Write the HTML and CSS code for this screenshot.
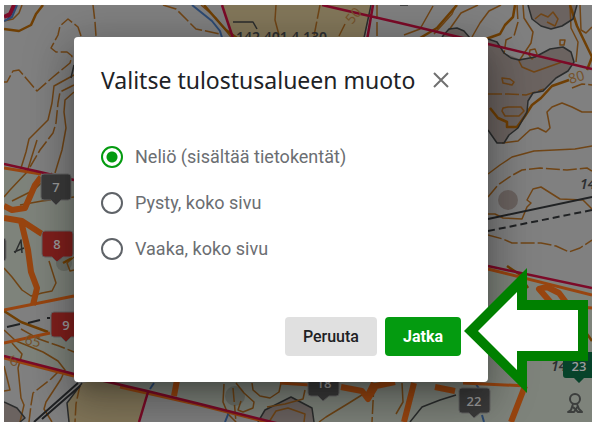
FILE: index.html
```html
<!DOCTYPE html>
<html lang="fi">
<head>
    <meta charset="UTF-8">
    <meta name="viewport" content="width=device-width, initial-scale=1.0">
    <title>Tulostusalueen muoto</title>
    <link rel="stylesheet" href="styles.css">
</head>
<body>
    <main class="stage">
        <svg class="map" viewBox="4 5 588 417" preserveAspectRatio="xMidYMid slice" aria-hidden="true">
            <!-- land areas -->
            <path class="wood" d="M4 164L74 180V296L4 310zM4 343L74 328V374L4 356zM74 374V380L200 403L280 422H592V292L488 265V374z"/>
            <path class="field" d="M222 5L234 40H364L372 5zM82 383L67 403L69 422H139L148 393L100 380z"/>
            <path class="rock" d="M488 39L497 42L504 53L519 59L535 57L550 49L563 47L571 52L574 62L568 71L556 78L543 92L533 93L528 101L527 112L518 128L509 135L504 143H497L488 130zM528 5L532 19L541 26L551 29L562 26L573 19L577 5zM442 37L449 29L457 28L464 31L470 38zM4 402L17 408L25 418L20 422H4z"/>
            <path class="rock edge" d="M258 422L265 410L291 397L312 408L314 422"/>
            <circle class="rock" cx="508" cy="200" r="10"/>
            <circle class="stone" cx="235" cy="396" r="10"/>
            <circle class="stone" cx="64" cy="263" r="8"/>

            <!-- contour lines -->
            <g class="contour">
                <path d="M4 21L13 19L19 13L22 5M74 75L54 86L52 103L48 120L29 139L26 152L21 168M74 92L65 100L64 112L66 128L62 150L55 173"/>
                <path d="M37 140L27 172L10 190L4 197M74 197L42 201L20 205M52 173L34 190L12 201M49 261L56 283L52 291L42 293L31 296L22 290L12 277L4 268M74 257L67 263L70 271L74 270"/>
                <path d="M4 330L16 341L26 345L43 352L58 361L65 370L61 379L46 402L44 409L52 422M12 343L22 354L18 368L21 398L24 405L20 422M4 366L8 382L10 390L4 391"/>
                <path d="M201 5L216 18L231 37M276 5L275 20L279 35M404 35L420 29L433 6M434 34L452 14L456 5M449 30L461 13L478 5M472 37L480 23L489 11L501 5M523 5L524 18L533 32L531 43L519 61L522 67L534 72L562 62L572 64"/>
                <path d="M570 5L571 28L578 42L576 62M580 5L581 30L586 33L592 27M502 78L510 79L514 82L512 85L503 83zM503 108L508 107H521L524 111L519 116H505L502 111zM560 40L565 40L564 45L560 45zM530 50L535 49L537 54L532 59L529 55z"/>
                <path d="M502 143L518 141L530 130L538 128L546 132L550 128L547 112L552 107L562 103L572 107L582 112H592M535 19L541 14L548 17L553 12L558 19L555 26L547 22"/>
                <path d="M488 174L500 165L512 157L534 151L575 149L592 146M488 214H495L503 218L522 219L527 207L531 203L527 200L533 189L541 187L560 199L583 200L592 209"/>
                <path d="M224 384L223 402L228 414L236 422M252 383L253 390L260 396L270 398L279 392L281 383M236 383L244 393L254 402L253 408L243 412L238 410L241 401M267 407L285 404L303 399L305 390M269 422L276 411L288 408L305 414L304 422M319 422L326 417L349 403L365 393M402 383L403 402L396 414"/>
            </g>
            <g class="contour dash">
                <path d="M93 5L95 22L96 36M81 36L78 27L68 19L60 26L58 35L51 48L56 52L67 52L72 56L70 63L53 77L37 91L19 70L13 71L7 82H4M74 85L60 92L58 103L56 123L53 133L40 150L30 167"/>
                <path d="M163 5L176 9L196 29L220 34M320 5L314 36M345 24L339 36M377 5V36M517 5L518 22L514 36L506 40L504 54M488 94L508 94L526 95L544 89M572 88L582 84L592 85"/>
                <path d="M488 197L498 185L511 176L522 170L540 168L567 170L587 168L592 171M488 235L503 239L512 243L541 243L556 246L569 252L580 248L592 240"/>
                <path d="M21 329L39 339L59 346L74 352M60 370L51 379L33 393L31 405L29 422M80 385L76 404L75 422M233 388L236 422M374 383L372 422"/>
            </g>
            <g class="contour bold">
                <path d="M4 29L19 31L31 25L36 14L43 5M204 5L217 20L226 30L241 41M415 41L437 28L457 5M486 39L500 34L505 25L513 17L515 5M570 5L577 26L592 57L587 70M569 80L552 86L541 98L532 105L525 116L517 127L507 127V122L498 118L490 108M4 311L21 322L48 332M63 263L72 258"/>
                <path d="M507 266L519 274L528 288M587 334L592 341"/>
            </g>

            <!-- streams, fences and power line -->
            <path class="water" d="M192 5L212 21L220 31L223 41M154 383L150 389M229 412L225 422M476 384L481 392M482 415L484 422"/>
            <path class="edge" d="M233 22H253L257 29M371 5L364 38M400 5H408M488 39L497 42L504 53L511 58L519 60L535 57L550 49L563 47L571 52L574 62L568 71L556 78L543 91L533 93L528 101L527 112L518 128L509 135L504 143H497L488 130M528 5L532 19L541 26L551 29L562 26L573 19L577 5M442 37L449 29L457 28L464 31L470 38"/>
            <path class="edge" d="M4 402L17 408L25 418L20 422M82 383L67 403L69 422M410 422L422 407L440 400L456 395M74 65L71 78M15 253L21 240L22 253M14 252L24 248"/>
            <path class="power" d="M34 422L78 383M42 419L80 386M7 327L20 324M28 323L40 320M47 318H50"/>
            <path class="power" d="M488 219L592 197"/>
            <path class="power broken" d="M488 231L592 210"/>

            <!-- roads and parcel borders -->
            <path class="road thin" d="M4 168L41 174M4 310L74 296M4 343L50 333M4 358L74 376M280 383L310 385M488 269L592 295M120 387L200 405L275 424M463 383L527 386M560 305L592 308"/>
            <path class="road" d="M41 177L35 185L25 208L12 210L4 206M4 218L22 221L42 234M21 221L28 250L31 272L37 288L33 305M177 380L174 396M414 383L404 422M525 386L511 422M341 387L362 391L368 399L376 386L395 382M374 383L366 399M455 391L435 387M553 305L539 289L547 287L559 293L568 305"/>
            <path class="border" d="M222 5L234 41M4 164L40 172L74 180M4 356L74 374L147 391L200 404L280 424M148 392L139 422M373 5L367 40M322 5L400 23L488 44L592 69M488 266L592 288M8 19L16 5"/>
            <path class="corner" d="M4 17L10 14L14 5"/>
            <path class="water" d="M4 21L12 17L17 5"/>

            <!-- map labels -->
            <text class="parcel upright" x="236" y="42">142 401 4 130</text>
            <text class="parcel" x="580" y="189">14</text>
            <text class="parcel" x="551" y="371">14</text>
            <text class="height" x="570" y="84" transform="rotate(-16 570 84)">80</text>
            <text class="height" x="24" y="344" transform="rotate(12 24 344)">65</text>
            <text class="height" x="352" y="25" transform="rotate(-50 352 25)">50</text>
            <text class="height" x="11" y="367" transform="rotate(-18 11 367)">6</text>
            <g class="statue">
                <circle cx="575" cy="399" r="5"/>
                <path d="M573 404L571 410L568 412H574L578 406M577 404L579 409L582 412H578L573 407"/>
            </g>

            <!-- control points -->
            <g class="pin">
                <path d="M44 174H68Q71 174 71 177V197Q71 200 68 200H61L56 205L51 200H44Q41 200 41 197V177Q41 174 44 174z"/>
                <text x="56" y="192">7</text>
            </g>
            <g class="pin">
                <path d="M-6 238H3Q6 238 6 241V258Q6 261 3 261H-6z"/>
            </g>
            <g class="pin red">
                <path d="M45 231H70Q73 231 73 234V254Q73 257 70 257H63L57 262L52 257H45Q42 257 42 254V234Q42 231 45 231z"/>
                <text x="57" y="249">8</text>
            </g>
            <g class="pin red">
                <path d="M54 312H79V337H71L66 342L61 337H54Q51 337 51 334V315Q51 312 54 312z"/>
                <text x="66" y="330">9</text>
            </g>
            <g class="pin">
                <path d="M311 370H336Q339 370 339 373V393Q339 396 336 396H329L323 401L318 396H311Q308 396 308 393V373Q308 370 311 370z"/>
                <text x="324" y="388">18</text>
            </g>
            <g class="pin">
                <path d="M462 388H487Q490 388 490 391V410Q490 413 487 413H480L474 418L469 413H462Q459 413 459 410V391Q459 388 462 388z"/>
                <text x="474" y="406">22</text>
            </g>
            <g class="pin green">
                <path d="M566 352H592Q595 352 595 355V375Q595 378 592 378H584L579 383L574 378H566Q563 378 563 375V355Q563 352 566 352z"/>
                <text x="579" y="371">23</text>
            </g>
        </svg>

        <form class="dialog" role="dialog" aria-labelledby="dialogTitle">
            <header class="dialog-header">
                <h1 id="dialogTitle">Valitse tulostusalueen muoto</h1>
                <button class="close" type="button" aria-label="Sulje">
                    <svg viewBox="0 0 16 16"><path d="M1 1L15 15M15 1L1 15"/></svg>
                </button>
            </header>
            <div class="options">
                <label><input type="radio" name="shape" value="square" checked>Neliö (sisältää tietokentät)</label>
                <label><input type="radio" name="shape" value="portrait">Pysty, koko sivu</label>
                <label><input type="radio" name="shape" value="landscape">Vaaka, koko sivu</label>
            </div>
            <footer class="actions">
                <button class="btn" type="button">Peruuta</button>
                <button class="btn primary" type="submit">Jatka</button>
            </footer>
        </form>

        <svg class="arrow" viewBox="0 0 124 126" aria-hidden="true">
            <path class="arrow-edge" d="M0 63L63 0V32H124V93H63V125z"/>
            <path class="arrow-fill" d="M14 63L53 24V42H114V83H53V102z"/>
        </svg>
    </main>
</body>
</html>
```

FILE: styles.css
```css
body {
    margin: 0;
    padding: 5px 12px 7px 4px;
    box-sizing: border-box;
    min-height: 100vh;
    display: flex;
    background-color: #fff;
    font-family: Roboto, sans-serif;
}
.stage {
    position: relative;
    flex: 1;
    display: flex;
    padding: 32px 104px 40px 70px;
    overflow: hidden;
    background-color: #808080;
}

/* map */
.map {
    position: absolute;
    inset: 0;
    width: 100%;
    height: 100%;
}
.map path {
    fill: none;
    stroke-linejoin: round;
}
.map .wood {
    fill: #7e837b;
}
.map .field {
    fill: #83775a;
}
.map .rock {
    fill: #6b6360;
}
.map .stone {
    fill: #6c7068;
}
.map .contour {
    stroke: #704516;
    stroke-width: 1.5;
}
.map .dash {
    stroke-dasharray: 14 3;
}
.map .bold {
    stroke: #6f3f04;
    stroke-width: 2.5;
}
.map .water {
    stroke: #2d4a73;
    stroke-width: 2;
}
.map .edge {
    stroke: #2b2d2d;
    stroke-width: 1.5;
}
.map .power {
    stroke: #202224;
    stroke-width: 2;
}
.map .broken {
    stroke-dasharray: 7 4;
}
.map .road {
    stroke: #984510;
    stroke-width: 6;
}
.map .thin {
    stroke-width: 3;
}
.map .border {
    stroke: #7c0a28;
    stroke-width: 2.5;
}
.map .corner {
    stroke: #7c0a28;
    stroke-width: 4;
}
.parcel {
    font: italic 600 14px "Noto Sans", sans-serif;
    fill: #2d2f31;
}
.upright {
    font-style: normal;
}
.height {
    font: 14px "Noto Sans", sans-serif;
    fill: #76532c;
}
.statue {
    fill: none;
    stroke: #3c3e3d;
    stroke-width: 2;
}
.pin path {
    fill: #3b3b3b;
    stroke: #666;
    stroke-width: 1;
}
.pin.red path {
    fill: #81201d;
}
.pin.green path {
    fill: #07432a;
    stroke: none;
}
.pin text {
    font: 600 13px "Open Sans", sans-serif;
    fill: #9b9b9b;
    text-anchor: middle;
}

/* dialog */
.dialog {
    position: relative;
    flex: 1;
    display: flex;
    flex-direction: column;
    box-sizing: border-box;
    padding: 28px 27px 26px;
    border-radius: 4px;
    background-color: #fff;
    box-shadow: 0 11px 15px -7px rgba(0, 0, 0, 0.2), 0 24px 38px 3px rgba(0, 0, 0, 0.14), 0 9px 46px 8px rgba(0, 0, 0, 0.22);
}
.dialog-header {
    display: flex;
    align-items: center;
    gap: 18px;
}
.dialog-header h1 {
    margin: 0;
    font: 400 23px/30px "Noto Sans", sans-serif;
    color: #202226;
    white-space: nowrap;
}
.close {
    display: flex;
    padding: 0;
    border: none;
    background: none;
    cursor: pointer;
}
.close svg {
    width: 16px;
    height: 16px;
    fill: none;
    stroke: #707070;
    stroke-width: 2;
}
.options {
    display: flex;
    flex-direction: column;
    gap: 22px;
    padding-top: 50px;
}
.options label {
    display: flex;
    align-items: center;
    gap: 12px;
    font-size: 18px;
    line-height: 24px;
    color: #6b6e72;
    cursor: pointer;
}
.options input {
    appearance: none;
    box-sizing: border-box;
    width: 22px;
    height: 22px;
    margin: 0;
    border: 2px solid #5f6368;
    border-radius: 50%;
}
.options input:checked {
    border-color: #049b10;
    background: radial-gradient(circle, #049b10 5px, #fff 6px);
}
.actions {
    display: flex;
    justify-content: flex-end;
    gap: 8px;
    margin-top: auto;
}
.btn {
    padding: 0 18px;
    border: none;
    border-radius: 4px;
    background-color: #e0e0e0;
    color: #202124;
    font: 500 16px/39px Roboto, sans-serif;
    cursor: pointer;
}
.btn.primary {
    background-color: #049b10;
    color: #fff;
    font-weight: 700;
}

/* arrow that points at the continue button */
.arrow {
    position: absolute;
    right: 4px;
    bottom: 28px;
    width: 124px;
    height: 126px;
}
.arrow-edge {
    fill: #008000;
}
.arrow-fill {
    fill: #fff;
}
```
